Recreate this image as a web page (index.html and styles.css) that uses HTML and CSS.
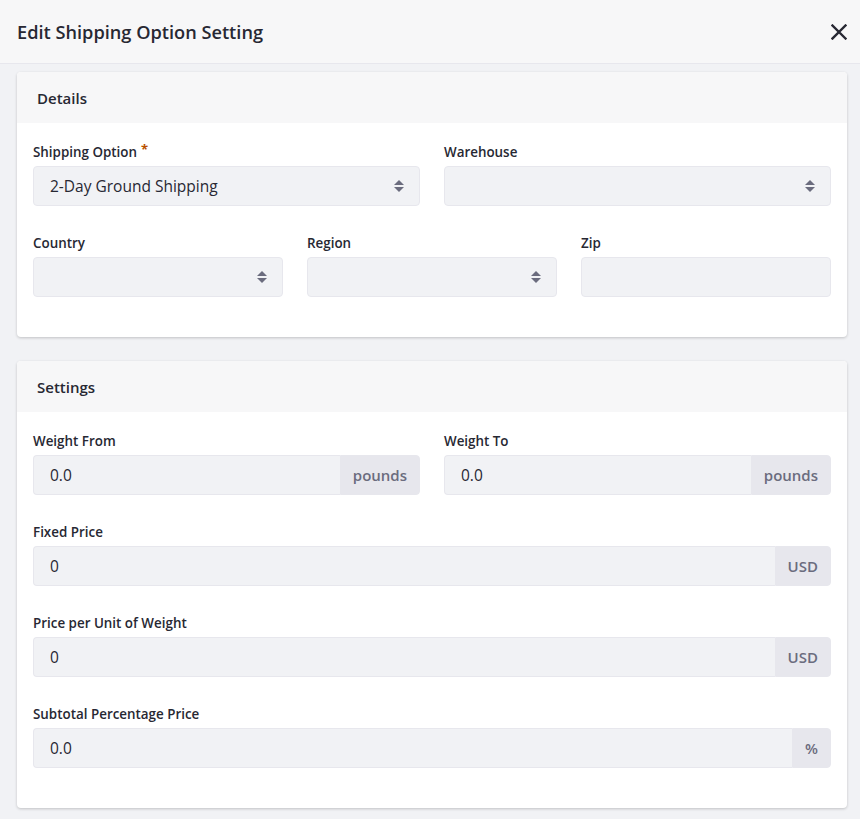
FILE: index.html
```html
<!DOCTYPE html>
<html lang="en">
<head>
<meta charset="utf-8">
<title>Edit Shipping Option Setting</title>
<link rel="stylesheet" href="styles.css">
</head>
<body>
<header class="modal-header">
  <h1 class="modal-title">Edit Shipping Option Setting</h1>
  <button class="close" aria-label="Close">
    <svg width="16" height="16" viewBox="0 0 16 16"><path d="M1.5 1.5 L14.5 14.5 M14.5 1.5 L1.5 14.5" stroke="#272833" stroke-width="2.4" fill="none" stroke-linecap="square"/></svg>
  </button>
</header>
<main class="modal-body">
  <section class="sheet">
    <div class="sheet-header">Details</div>
    <div class="sheet-body">
      <div class="row cols-2">
        <div class="field">
          <label>Shipping Option <span class="req">*</span></label>
          <div class="select"><span>2-Day Ground Shipping</span><i class="caret"></i></div>
        </div>
        <div class="field">
          <label>Warehouse</label>
          <div class="select"><span></span><i class="caret"></i></div>
        </div>
      </div>
      <div class="row cols-3">
        <div class="field">
          <label>Country</label>
          <div class="select"><span></span><i class="caret"></i></div>
        </div>
        <div class="field">
          <label>Region</label>
          <div class="select"><span></span><i class="caret"></i></div>
        </div>
        <div class="field">
          <label>Zip</label>
          <div class="input"></div>
        </div>
      </div>
    </div>
  </section>

  <section class="sheet">
    <div class="sheet-header">Settings</div>
    <div class="sheet-body">
      <div class="row cols-2">
        <div class="field">
          <label>Weight From</label>
          <div class="group"><div class="input">0.0</div><div class="append">pounds</div></div>
        </div>
        <div class="field">
          <label>Weight To</label>
          <div class="group"><div class="input">0.0</div><div class="append">pounds</div></div>
        </div>
      </div>
      <div class="row">
        <div class="field">
          <label>Fixed Price</label>
          <div class="group"><div class="input">0</div><div class="append">USD</div></div>
        </div>
      </div>
      <div class="row">
        <div class="field">
          <label>Price per Unit of Weight</label>
          <div class="group"><div class="input">0</div><div class="append">USD</div></div>
        </div>
      </div>
      <div class="row">
        <div class="field">
          <label>Subtotal Percentage Price</label>
          <div class="group"><div class="input">0.0</div><div class="append">%</div></div>
        </div>
      </div>
    </div>
  </section>
</main>
</body>
</html>
```

FILE: styles.css
```css
* { box-sizing: border-box; }
html, body { margin: 0; padding: 0; }
body {
  background: #f1f2f5;
  font-family: "Open Sans", "Noto Sans", sans-serif;
  color: #272833;
  width: 860px;
  height: 819px;
  overflow: hidden;
}
.modal-header {
  height: 64px;
  background: #f7f7f8;
  border-bottom: 1px solid #e7e7ed;
  display: flex;
  align-items: center;
  justify-content: space-between;
  padding: 0 12px 0 17px;
}
.modal-title {
  margin: 0;
  font-size: 18.2px;
  font-weight: 600;
  color: #272833;
}
.close {
  border: 0;
  background: transparent;
  padding: 0;
  width: 18px;
  height: 18px;
  display: flex;
  align-items: center;
  justify-content: center;
}
.modal-body {
  padding: 8px 13px 0 17px;
  display: flex;
  flex-direction: column;
  gap: 24px;
}
.sheet {
  background: #fff;
  border-radius: 4px;
  box-shadow: 0 1px 3px rgba(0, 0, 0, 0.2);
  overflow: hidden;
}
.sheet-header {
  background: #f7f7f8;
  height: 51px;
  display: flex;
  align-items: center;
  padding-left: 20px;
  font-size: 15px;
  font-weight: 600;
}
.sheet-body {
  padding: 19px 16px 40px 16px;
  display: flex;
  flex-direction: column;
  gap: 27px;
}
.row { display: grid; grid-template-columns: 1fr; }
.cols-2 { grid-template-columns: 1fr 1fr; column-gap: 24px; }
.cols-3 { grid-template-columns: 1fr 1fr 1fr; column-gap: 24px; }
.field label {
  display: flex;
  align-items: center;
  gap: 4px;
  font-size: 13.4px;
  font-weight: 600;
  height: 20px;
  line-height: 20px;
  margin-bottom: 4px;
  color: #272833;
}
.req { color: #b95000; font-size: 13px; line-height: 1; margin-top: -5px; font-weight: 700; }
.select, .input {
  height: 40px;
  background: #f1f2f5;
  border: 1px solid #e7e7ed;
  border-radius: 4px;
  display: flex;
  align-items: center;
  padding: 0 16px;
  font-size: 15.5px;
  color: #272833;
}
.select { justify-content: space-between; padding-right: 15px; }
.caret {
  width: 10px;
  height: 12px;
  position: relative;
  display: block;
}
.caret::before, .caret::after {
  content: "";
  position: absolute;
  left: 0;
  border-left: 5px solid transparent;
  border-right: 5px solid transparent;
}
.caret::before { top: 0; border-bottom: 5px solid #6b6c7e; }
.caret::after { bottom: 0; border-top: 5px solid #6b6c7e; }
.group { display: flex; }
.group .input {
  flex: 1;
  border-top-right-radius: 0;
  border-bottom-right-radius: 0;
  border-right: 0;
}
.append {
  height: 40px;
  background: #e7e7ed;
  border: 1px solid #e7e7ed;
  border-radius: 0 4px 4px 0;
  display: flex;
  align-items: center;
  padding: 0 12px;
  font-size: 15px;
  font-weight: 600;
  color: #6b6c7e;
}
```
